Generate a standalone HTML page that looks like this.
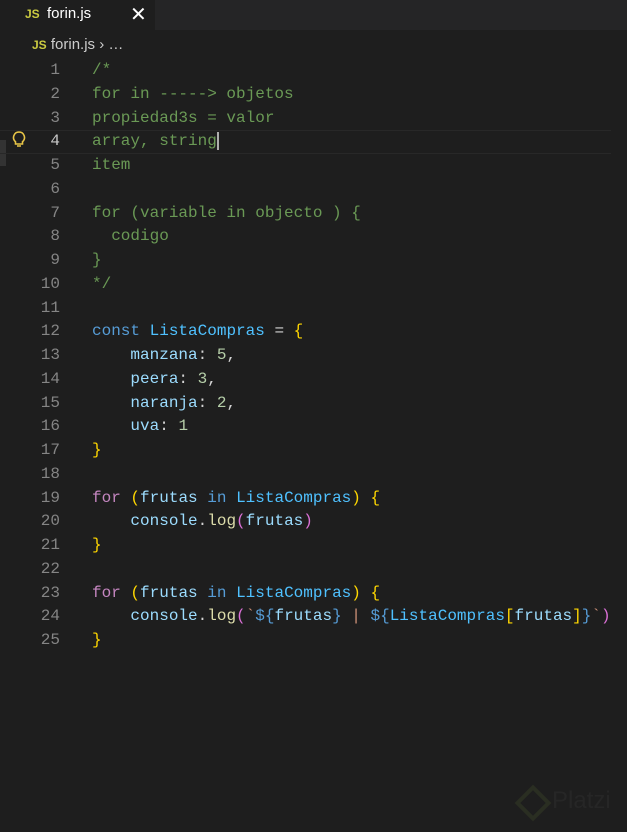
<!DOCTYPE html>
<html><head><style>
body{margin:0;width:627px;height:832px;background:#1e1e1e;overflow:hidden;position:relative;font-family:"Liberation Sans",sans-serif}
.tabs{position:absolute;left:0;top:0;width:627px;height:30px;background:#252526}
.tab{position:absolute;left:0;top:0;width:155px;height:30px;background:#1e1e1e;color:#fff;font-size:15px}
.js{color:#cbcb41;font-weight:bold;font-size:12px}
.bc{position:absolute;left:32px;top:36px;color:#ccc;font-size:15px}
.code{position:absolute;left:0;top:59px;font-family:"Liberation Mono",monospace;font-size:16px}
.l{height:23.75px;line-height:23.75px;white-space:pre;position:relative}
.n{display:inline-block;width:60px;text-align:right;color:#858585;margin-right:32px}
.c{color:#6a9955}.k{color:#569cd6}.f{color:#c586c0}.v{color:#9cdcfe}.o{color:#4fc1ff}.num{color:#b5cea8}.y{color:#ffd700}.p{color:#da70d6}.fn{color:#dcdcaa}.s{color:#ce9178}.w{color:#d4d4d4}
.cur{box-shadow:inset 0 1px #282828,inset 0 -1px #282828}
</style></head><body>
<div class="tabs"><div class="tab"><span class="js" style="position:absolute;left:25px;top:7px">JS</span><span style="position:absolute;left:47px;top:5px">forin.js</span><span style="position:absolute;left:130px;top:2px;font-size:20px">✕</span></div></div>
<div class="bc"><span class="js">JS</span> forin.js › …</div>
<div style="position:absolute;left:0;top:140px;width:6px;height:26px;background:#333"></div>
<svg style="position:absolute;left:12px;top:131px" width="14" height="18" viewBox="0 0 14 18"><path d="M7 1a5.5 5.5 0 0 0-3.5 9.7V13h7v-2.3A5.5 5.5 0 0 0 7 1zM5 15h4" stroke="#e8c547" stroke-width="1.6" fill="none"/></svg>
<div class="code">
<div class="l"><span class="n">1</span><span class="c">/*</span></div>
<div class="l"><span class="n">2</span><span class="c">for in -----&gt; objetos</span></div>
<div class="l"><span class="n">3</span><span class="c">propiedad3s = valor</span></div>
<div class="l cur"><span class="n" style="color:#c6c6c6">4</span><span class="c">array, string</span><span style="border-left:2px solid #aeafad"></span></div>
<div class="l"><span class="n">5</span><span class="c">item</span></div>
<div class="l"><span class="n">6</span></div>
<div class="l"><span class="n">7</span><span class="c">for (variable in objecto ) {</span></div>
<div class="l"><span class="n">8</span><span class="c">  codigo</span></div>
<div class="l"><span class="n">9</span><span class="c">}</span></div>
<div class="l"><span class="n">10</span><span class="c">*/</span></div>
<div class="l"><span class="n">11</span></div>
<div class="l"><span class="n">12</span><span class="k">const</span> <span class="o">ListaCompras</span> <span class="w">=</span> <span class="y">{</span></div>
<div class="l"><span class="n">13</span>    <span class="v">manzana</span><span class="w">:</span> <span class="num">5</span><span class="w">,</span></div>
<div class="l"><span class="n">14</span>    <span class="v">peera</span><span class="w">:</span> <span class="num">3</span><span class="w">,</span></div>
<div class="l"><span class="n">15</span>    <span class="v">naranja</span><span class="w">:</span> <span class="num">2</span><span class="w">,</span></div>
<div class="l"><span class="n">16</span>    <span class="v">uva</span><span class="w">:</span> <span class="num">1</span></div>
<div class="l"><span class="n">17</span><span class="y">}</span></div>
<div class="l"><span class="n">18</span></div>
<div class="l"><span class="n">19</span><span class="f">for</span> <span class="y">(</span><span class="v">frutas</span> <span class="k">in</span> <span class="o">ListaCompras</span><span class="y">)</span> <span class="y">{</span></div>
<div class="l"><span class="n">20</span>    <span class="v">console</span><span class="w">.</span><span class="fn">log</span><span class="p">(</span><span class="v">frutas</span><span class="p">)</span></div>
<div class="l"><span class="n">21</span><span class="y">}</span></div>
<div class="l"><span class="n">22</span></div>
<div class="l"><span class="n">23</span><span class="f">for</span> <span class="y">(</span><span class="v">frutas</span> <span class="k">in</span> <span class="o">ListaCompras</span><span class="y">)</span> <span class="y">{</span></div>
<div class="l"><span class="n">24</span>    <span class="v">console</span><span class="w">.</span><span class="fn">log</span><span class="p">(</span><span class="s">`</span><span class="k">${</span><span class="v">frutas</span><span class="k">}</span><span class="s"> | </span><span class="k">${</span><span class="o">ListaCompras</span><span class="y">[</span><span class="v">frutas</span><span class="y">]</span><span class="k">}</span><span class="s">`</span><span class="p">)</span></div>
<div class="l"><span class="n">25</span><span class="y">}</span></div>
</div>
<div style="position:absolute;left:520px;top:790px;width:18px;height:18px;border:4px solid #2a2e22;transform:rotate(45deg)"></div>
<div style="position:absolute;left:552px;top:787px;color:#262626;font-size:24px">Platzi</div>
</body></html>
